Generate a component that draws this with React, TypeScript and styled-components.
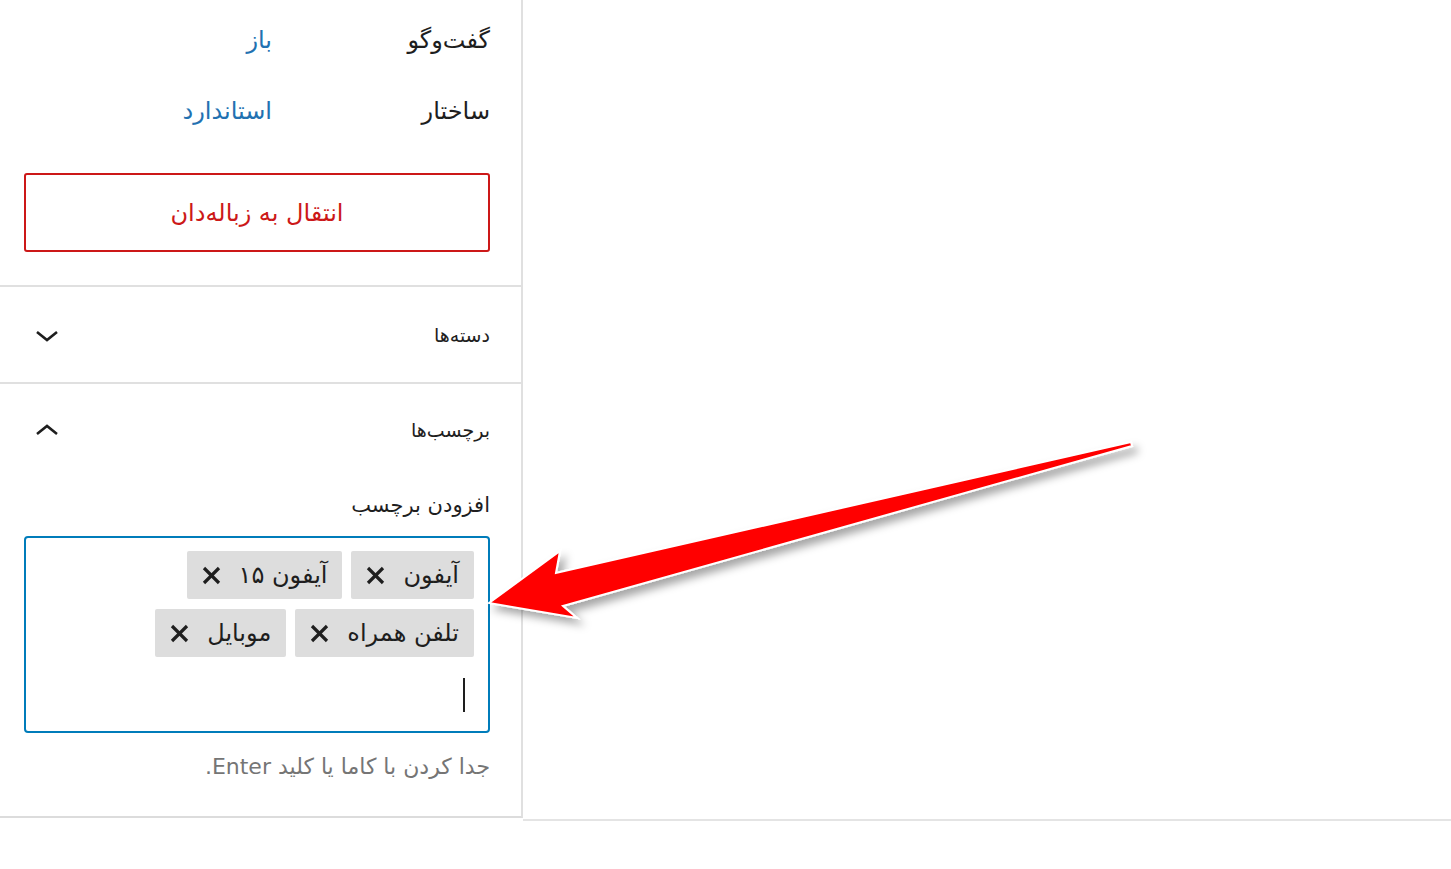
import React from "react";
import styled, { createGlobalStyle } from "styled-components";

const GlobalStyle = createGlobalStyle`
  html, body {
    margin: 0;
    padding: 0;
    background: #ffffff;
  }
  body {
    font-family: Tahoma, "DejaVu Sans", "Noto Sans", sans-serif;
    color: #1e1e1e;
  }
`;

const Page = styled.div`
  position: relative;
  width: 1451px;
  height: 869px;
  display: flex;
  align-items: flex-start;
  overflow: hidden;
`;

const Sidebar = styled.aside`
  width: 521px;
  display: flex;
  flex-direction: column;
  direction: rtl;
  border-right: 2px solid #e0e0e0;
  border-bottom: 2px solid #dcdcdc;
`;

const Filler = styled.div`
  flex: 1;
  height: 819px;
  border-bottom: 2px solid #e4e4e4;
`;

const Section = styled.section`
  display: flex;
  flex-direction: column;
  padding: 0 31px 0 24px;
  border-bottom: 2px solid #e0e0e0;

  &:last-child {
    border-bottom: none;
  }
`;

const Summary = styled.div`
  display: flex;
  flex-direction: column;
  padding: 4px 31px 33px 24px;
  border-bottom: 2px solid #e0e0e0;
`;

const InfoRow = styled.div`
  height: 71px;
  display: flex;
  align-items: center;
  font-size: 24px;
`;

const InfoLabel = styled.span`
  width: 218px;
  color: #1e1e1e;
`;

const InfoValue = styled.a`
  color: #2271b1;
  text-decoration: none;
`;

const TrashButton = styled.button`
  margin-top: 27px;
  height: 79px;
  width: 100%;
  border: 2px solid #cc1818;
  border-radius: 3px;
  background: #ffffff;
  color: #cc1818;
  font-family: inherit;
  font-size: 24px;
  padding: 0;
`;

const PanelHeader = styled.div<{ $height: number }>`
  height: ${(p) => p.$height}px;
  display: flex;
  align-items: center;
  justify-content: space-between;
`;

const PanelTitle = styled.span`
  font-size: 19px;
  color: #1e1e1e;
`;

const Chevron = styled.svg`
  width: 44px;
  height: 44px;
  margin-left: 1px;
  stroke: #1e1e1e;
  stroke-width: 2.6;
  fill: none;
`;

const FieldLabel = styled.label`
  font-size: 21px;
  color: #1e1e1e;
  margin-top: 17px;
`;

const TokenBox = styled.div`
  margin-top: 19px;
  height: 197px;
  box-sizing: border-box;
  border: 2px solid #007cba;
  border-radius: 4px;
  padding: 13px 14px;
  display: flex;
  flex-wrap: wrap;
  align-content: flex-start;
  gap: 10px 9px;
`;

const Token = styled.span`
  height: 48px;
  display: inline-flex;
  align-items: center;
  gap: 17px;
  padding: 0 15px 0 14px;
  background: #dddddd;
  border-radius: 2px;
  font-size: 24px;
  color: #1e1e1e;
`;

const CloseIcon = styled.svg`
  width: 21px;
  height: 21px;
  stroke: #1e1e1e;
  stroke-width: 3.2;
`;

const CaretLine = styled.div`
  flex-basis: 100%;
  height: 48px;
  display: flex;
  align-items: center;
  padding-right: 9px;
  margin-top: 4px;
`;

const Caret = styled.span`
  width: 2px;
  height: 34px;
  background: #1e1e1e;
`;

const Help = styled.p`
  margin: 21px 0 37px;
  font-size: 22px;
  color: #757575;
`;

const Overlay = styled.svg`
  position: absolute;
  left: 0;
  top: 0;
  width: 1451px;
  height: 869px;
  pointer-events: none;
`;

const tags = ["آیفون", "آیفون ۱۵", "تلفن همراه", "موبایل"];

function ChevronIcon({ up }: { up?: boolean }) {
  return (
    <Chevron viewBox="0 0 44 44">
      {up ? <polyline points="12,26 22,18 32,26" /> : <polyline points="12,19 22,27 32,19" />}
    </Chevron>
  );
}

export default function App() {
  return (
    <Page>
      <GlobalStyle />
      <Sidebar>
        <Summary>
          <InfoRow>
            <InfoLabel>گفت‌وگو</InfoLabel>
            <InfoValue href="#">باز</InfoValue>
          </InfoRow>
          <InfoRow>
            <InfoLabel>ساختار</InfoLabel>
            <InfoValue href="#">استاندارد</InfoValue>
          </InfoRow>
          <TrashButton>انتقال به زباله‌دان</TrashButton>
        </Summary>

        <Section>
          <PanelHeader $height={95}>
            <PanelTitle>دسته‌ها</PanelTitle>
            <ChevronIcon />
          </PanelHeader>
        </Section>

        <Section>
          <PanelHeader $height={92}>
            <PanelTitle>برچسب‌ها</PanelTitle>
            <ChevronIcon up />
          </PanelHeader>
          <FieldLabel>افزودن برچسب</FieldLabel>
          <TokenBox>
            {tags.map((t) => (
              <Token key={t}>
                {t}
                <CloseIcon viewBox="0 0 21 21">
                  <line x1="3" y1="3" x2="18" y2="18" />
                  <line x1="18" y1="3" x2="3" y2="18" />
                </CloseIcon>
              </Token>
            ))}
            <CaretLine>
              <Caret />
            </CaretLine>
          </TokenBox>
          <Help>جدا کردن با کاما یا کلید Enter.</Help>
        </Section>
      </Sidebar>
      <Filler />

      <Overlay viewBox="0 0 1451 869">
        <defs>
          <filter id="arrowShadow" x="-10%" y="-30%" width="130%" height="180%">
            <feDropShadow dx="5" dy="6" stdDeviation="4" floodColor="#000" floodOpacity="0.35" />
          </filter>
        </defs>
        <polygon
          points="489,603 560,551 556,573 1131,442 1132,446 563,606 577,618"
          fill="#ff0000"
          stroke="#ffffff"
          strokeWidth="2"
          strokeLinejoin="miter"
          filter="url(#arrowShadow)"
        />
      </Overlay>
    </Page>
  );
}
